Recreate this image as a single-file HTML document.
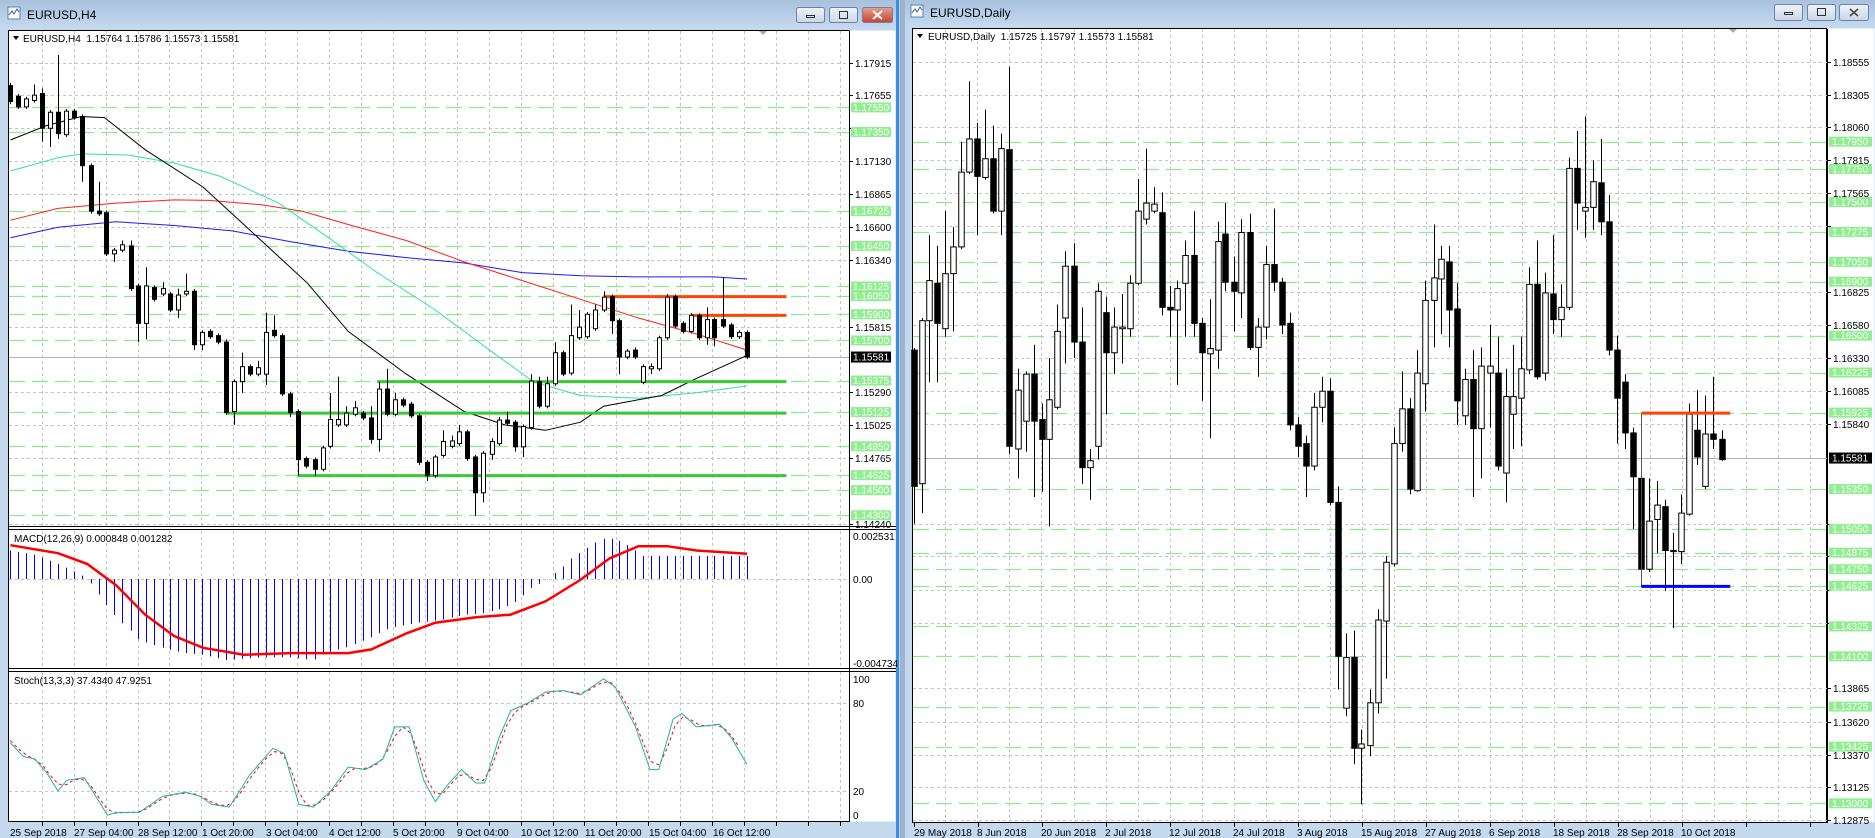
<!DOCTYPE html>
<html><head><meta charset="utf-8"><style>
html,body{margin:0;padding:0;width:1875px;height:838px;overflow:hidden;background:#b9d1ea;}
svg{display:block;font-family:"Liberation Sans",sans-serif;}
</style></head><body>
<svg id="s" width="1875" height="838" viewBox="0 0 1875 838" xmlns="http://www.w3.org/2000/svg">
<defs><linearGradient id="tb" x1="0" y1="0" x2="0" y2="1"><stop offset="0" stop-color="#a9c1de"/><stop offset="1" stop-color="#c3d8ee"/></linearGradient>
<linearGradient id="bt" x1="0" y1="0" x2="0" y2="1"><stop offset="0" stop-color="#eef3fa"/><stop offset="1" stop-color="#c9d7e8"/></linearGradient>
<linearGradient id="bx" x1="0" y1="0" x2="0" y2="1"><stop offset="0" stop-color="#e8a090"/><stop offset="1" stop-color="#c84030"/></linearGradient></defs>
<rect x="0" y="0" width="898" height="838" fill="#c4d8ee"/>
<rect x="0" y="0" width="898" height="27" fill="url(#tb)"/>
<rect x="905" y="0" width="970" height="838" fill="#c4d8ee"/>
<rect x="905" y="0" width="970" height="25" fill="url(#tb)"/>
<rect x="896" y="0" width="3" height="838" fill="#3b8fe0"/>
<rect x="900" y="0" width="5" height="838" fill="#9fb4cc"/>
<rect x="8" y="7" width="12" height="12" fill="#fff" stroke="#5a7fb0"/><path d="M9 15 L12 11 L14 14 L17 9 L19 12" stroke="#2a60b0" fill="none"/>
<text x="27" y="19" font-size="12" fill="#000">EURUSD,H4</text>
<rect x="911" y="5" width="12" height="12" fill="#fff" stroke="#5a7fb0"/><path d="M912 13 L915 9 L917 12 L920 7 L922 10" stroke="#2a60b0" fill="none"/>
<text x="930" y="17" font-size="12" fill="#000">EURUSD,Daily</text>
<g stroke="#6b82a3" stroke-width="1">
<rect x="796.5" y="7.5" width="28" height="15" rx="2" fill="url(#bt)"/><rect x="829.5" y="7.5" width="28" height="15" rx="2" fill="url(#bt)"/><rect x="862.5" y="7.5" width="30" height="15" rx="2" fill="url(#bx)"/>
<rect x="1774.5" y="4.5" width="28" height="16" rx="2" fill="url(#bt)"/><rect x="1807.5" y="4.5" width="28" height="16" rx="2" fill="url(#bt)"/><rect x="1839.5" y="4.5" width="29" height="16" rx="2" fill="url(#bt)"/>
</g>
<g stroke="#333" fill="none"><rect x="806.5" y="15.5" width="8" height="2"/><rect x="839.5" y="11.5" width="8" height="7"/><rect x="1784.5" y="12.5" width="8" height="2"/><rect x="1817.5" y="8.5" width="8" height="7"/></g>
<path d="M873 11 L882 19 M882 11 L873 19" stroke="#fff" stroke-width="2"/>
<path d="M1850 9 L1858 16 M1858 9 L1850 16" stroke="#444" stroke-width="1.5"/>
<rect x="8.5" y="30.5" width="841" height="791" fill="#fff" stroke="#000"/>
<rect x="849.5" y="30.5" width="46" height="791" fill="#fff"/>
<rect x="912.5" y="28.5" width="914" height="794" fill="#fff" stroke="#000"/>
<rect x="1827.5" y="28.5" width="47" height="794" fill="#fff"/>
<g id="g"></g>
<path d="M13 36 L19 36 L16 40 Z" fill="#000"/>
<text x="23" y="42" font-size="10" fill="#000">EURUSD,H4&#160;&#160;1.15764 1.15786 1.15573 1.15581</text>
<path d="M917 34 L923 34 L920 38 Z" fill="#000"/>
<text x="928" y="40" font-size="10" fill="#000">EURUSD,Daily&#160;&#160;1.15725 1.15797 1.15573 1.15581</text>
<path d="M759 31 L767 31 L763 35 Z" fill="#aaa"/>
<path d="M1729 29 L1737 29 L1733 33 Z" fill="#aaa"/>
<text x="14" y="542" font-size="10">MACD(12,26,9) 0.000848 0.001282</text>
<text x="14" y="684" font-size="10">Stoch(13,3,3) 37.4340 47.9251</text>
<g font-size="10" fill="#000">
<text x="853" y="540">0.002531</text><text x="853" y="583">0.00</text><text x="853" y="667">-0.004734</text>
<text x="853" y="683">100</text><text x="853" y="707">80</text><text x="853" y="795">20</text><text x="853" y="819">0</text>
</g>
<g font-size="10" fill="#000" id="dates">
<text x="10" y="836">25 Sep 2018</text><text x="74" y="836">27 Sep 04:00</text><text x="138" y="836">28 Sep 12:00</text><text x="202" y="836">1 Oct 20:00</text><text x="266" y="836">3 Oct 04:00</text><text x="329" y="836">4 Oct 12:00</text><text x="393" y="836">5 Oct 20:00</text><text x="457" y="836">9 Oct 04:00</text><text x="521" y="836">10 Oct 12:00</text><text x="585" y="836">11 Oct 20:00</text><text x="649" y="836">15 Oct 04:00</text><text x="713" y="836">16 Oct 12:00</text>
<text x="914" y="836">29 May 2018</text><text x="977" y="836">8 Jun 2018</text><text x="1041" y="836">20 Jun 2018</text><text x="1105" y="836">2 Jul 2018</text><text x="1169" y="836">12 Jul 2018</text><text x="1233" y="836">24 Jul 2018</text><text x="1297" y="836">3 Aug 2018</text><text x="1361" y="836">15 Aug 2018</text><text x="1425" y="836">27 Aug 2018</text><text x="1489" y="836">6 Sep 2018</text><text x="1553" y="836">18 Sep 2018</text><text x="1617" y="836">28 Sep 2018</text><text x="1681" y="836">10 Oct 2018</text>
</g>
<g id="labels" font-size="10"></g>
</svg>
<script>
var NS="http://www.w3.org/2000/svg",G=document.getElementById("g"),LB=document.getElementById("labels");
function el(t,a,p){var e=document.createElementNS(NS,t);for(var k in a)e.setAttribute(k,a[k]);(p||G).appendChild(e);return e;}
var Lw={ox:0,sx:1/1.723,sy:1/1.871},Rw={ox:900,sx:1/1.608,sy:1/1.871};
function X(w,x){return w.ox+x*w.sx;}function Y(w,y){return y*w.sy;}
function hl(x1,x2,y,c,sw,da){var a={x1:x1,x2:x2,y1:y,y2:y,stroke:c,"stroke-width":sw||1};if(da)a["stroke-dasharray"]=da;el("line",a);}
function vl(x,y1,y2,c,sw,da){var a={x1:x,x2:x,y1:y1,y2:y2,stroke:c,"stroke-width":sw||1};if(da)a["stroke-dasharray"]=da;el("line",a);}
var GR="#c4c4c4";
for(var gx=72;gx<1463;gx+=55){var x=Math.round(X(Lw,gx))+.5;vl(x,31,526,GR,1,"3,3");vl(x,531,668,GR,1,"3,3");vl(x,672,821,GR,1,"3,3");vl(x,821,826,"#000");}
[[1.17915,117],[1.17655,178],[1.17130,302],[1.16865,363],[1.16600,425],[1.16340,487],[1.15815,611],[1.15290,734],[1.15025,796],[1.14765,857],[1.14240,981],[0,240]].forEach(function(p){var y=Math.round(Y(Lw,p[1]))+.5;hl(9,849,y,GR,1,"3,3");hl(849,853,y,"#000");if(p[0])el("text",{x:855,y:y+3.5,"font-size":10},LB).textContent=p[0].toFixed(5);});
hl(9,849,Math.round(Y(Lw,1315))+.5,GR,1,"3,3");hl(9,849,Math.round(Y(Lw,1480))+.5,GR,1,"3,3");hl(9,849,579.5,GR,1,"3,3");
var lg=[["1.17550",201],["1.17350",247],["1.16725",395],["1.16450",460],["1.16125",536],["1.16050",554],["1.15900",588],["1.15700",637],["1.15375",712],["1.15125",771],["1.14850",835],["1.14625",889],["1.14500",917],["1.14300",964]];
lg.forEach(function(p){var y=Math.round(Y(Lw,p[1]))+.5;hl(9,849,y,"#90e890",1.2,"16,7");});
hl(9,896,526.5,"#000");hl(9,896,529.5,"#000");hl(9,896,668.5,"#000");hl(9,896,671.5,"#000");
vl(849.5,31,822,"#000");
hl(9,849,Math.round(Y(Lw,668))+.5,"#b0b0b0");
function pl(w,pts,c,sw,da){var s=pts.map(function(p){return X(w,p[0]).toFixed(1)+","+Y(w,p[1]).toFixed(1)}).join(" ");var a={points:s,fill:"none",stroke:c,"stroke-width":sw||1};if(da)a["stroke-dasharray"]=da;el("polyline",a);}
pl(Lw,[[18,445],[100,425],[200,415],[300,422],[400,432],[500,452],[600,470],[700,482],[800,492],[900,510],[1000,516],[1100,518],[1230,518],[1287,522]],"#1a1aff");
pl(Lw,[[18,412],[100,390],[200,380],[300,374],[360,375],[450,383],[520,395],[600,420],[700,450],[800,490],[900,525],[1000,560],[1100,595],[1200,625],[1287,655]],"#ff2020");
pl(Lw,[[18,320],[100,295],[140,288],[220,290],[300,305],[380,330],[480,380],[560,440],[650,510],[750,580],[850,660],[920,715],[1000,740],[1100,745],[1200,735],[1287,722]],"#30e0a8");
pl(Lw,[[18,262],[80,235],[140,218],[180,220],[250,280],[350,350],[450,450],[530,530],[600,620],[700,700],[800,770],[870,795],[940,805],[1000,790],[1040,760],[1140,740],[1200,708],[1287,665]],"#000");
function hlz(w,x1,x2,y,c,sw){hl(X(w,x1),X(w,x2),Y(w,y),c,sw);}
hlz(Lw,1040,1355,555,"#ff4500",3);hlz(Lw,1190,1355,590,"#ff4500",3);
hlz(Lw,650,1355,714,"#33cc33",3);hlz(Lw,390,1355,773,"#33cc33",3);hlz(Lw,513,1355,890,"#33cc33",3);
function candles(w,arr,bw){arr.forEach(function(c){var x=Math.round(X(w,c[0]))+.5,t=Y(w,c[1]),b=Y(w,c[2]),h=Y(w,c[4]!=null?c[4]:c[1]-4),l=Y(w,c[5]!=null?c[5]:c[2]+4);vl(x,h,l,"#000");var hh=Math.max(b-t,1);el("rect",{x:x-bw/2,y:t,width:bw,height:hh,fill:c[3]=="w"?"#fff":"#000",stroke:"#000","stroke-width":1});});}
var LC=[[18,160,190,"b",155,195],[31,180,200,"b"],[44,185,200,"w"],[58,178,188,"w",158],[72,175,240,"b",165,265],[86,210,240,"w",null,275],[100,210,250,"b",103,260],[114,208,252,"w"],[128,208,220,"b"],[142,218,310,"b",null,340],[156,310,395,"b",null,400],[170,395,400,"b",340],[183,398,475,"b"],[197,468,475,"w",null,490],[211,458,468,"w",450],[225,460,540,"b",450],[238,535,605,"b",null,640],[252,535,605,"w",500,635],[266,538,560,"b"],[280,540,550,"w",528],[293,550,580,"b"],[307,552,580,"w",540,595],[320,545,550,"w",512],[334,545,645,"b",null,655],[348,622,645,"w",null,655],[362,620,630,"b"],[376,628,640,"b"],[390,640,772,"b",635],[403,714,770,"w",null,795],[417,686,714,"w",660,735],[431,686,700,"b"],[445,688,700,"w",675],[459,622,700,"w",585,720],[472,618,628,"b",590],[486,628,737,"b"],[500,737,772,"b",null,780],[514,770,860,"b",null,890],[528,858,872,"b"],[542,860,878,"b",null,890],[556,838,878,"w"],[569,785,835,"w",735],[583,785,795,"w",705],[597,773,795,"w",760],[611,763,775,"w",750],[625,773,782,"b"],[639,782,822,"b",760,830],[653,728,822,"w",715,845],[666,728,775,"b",690],[680,748,775,"w",735],[694,748,758,"b"],[708,756,778,"b"],[722,778,865,"b",null,870],[736,865,890,"b",null,900],[750,855,890,"w"],[764,826,852,"w",805],[778,825,835,"w",815],[791,808,830,"w",795],[805,808,858,"b"],[819,855,922,"b",null,965],[833,848,922,"w",null,940],[847,826,850,"w",820,860],[860,786,830,"w",780],[873,786,792,"b",770],[887,790,836,"b",null,845],[901,798,836,"w",null,855],[915,713,800,"w",700],[929,714,760,"b",705],[943,718,760,"w",705],[956,660,718,"w",640],[970,660,700,"b"],[984,628,698,"w",570],[998,612,632,"w",580],[1012,588,630,"w"],[1026,580,615,"w",570],[1040,556,580,"w",545],[1054,555,600,"b",null,625],[1066,600,668,"b",null,700],[1080,657,668,"w"],[1094,655,668,"b",650],[1108,686,715,"w"],[1122,686,690,"w",680,700],[1135,632,690,"w"],[1149,556,632,"w",550],[1163,555,610,"b"],[1177,605,620,"b"],[1190,590,620,"w"],[1204,590,632,"b"],[1218,598,632,"w",575,645],[1231,598,632,"b",null,648],[1245,598,610,"b",520],[1259,608,630,"b"],[1273,622,630,"w"],[1287,622,668,"b"]];
candles(Lw,LC,4);
function interp(pts,x){for(var i=0;i<pts.length-1;i++){if(x<=pts[i+1][0]){var t=(x-pts[i][0])/(pts[i+1][0]-pts[i][0]);return pts[i][1]+t*(pts[i+1][1]-pts[i][1]);}}return pts[pts.length-1][1];}
var MH=[[18,1030],[60,1038],[100,1055],[140,1075],[155,1090],[170,1112],[185,1135],[200,1155],[225,1180],[240,1198],[260,1205],[290,1215],[320,1222],[350,1225],[390,1235],[450,1230],[500,1230],[540,1235],[560,1222],[600,1210],[640,1192],[670,1175],[720,1165],[760,1160],[800,1150],[830,1148],[860,1140],[885,1128],[900,1115],[915,1100],[930,1092],[942,1085],[956,1072],[970,1060],[984,1045],[998,1035],[1012,1025],[1026,1015],[1040,1008],[1054,1008],[1066,1012],[1080,1020],[1094,1030],[1108,1040],[1287,1040]];
LC.forEach(function(c){var x=Math.round(X(Lw,c[0]))+.5;vl(x,579,Y(Lw,interp(MH,c[0])),"#0000ff");});
pl(Lw,[[18,1020],[100,1035],[150,1055],[200,1095],[250,1150],[300,1190],[350,1212],[420,1225],[500,1222],[600,1222],[640,1215],[700,1185],[750,1165],[820,1155],[880,1150],[940,1125],[1000,1085],[1050,1045],[1100,1022],[1150,1022],[1200,1030],[1287,1036]],"#ff0000",2.5);
var ST=[[18,1390],[40,1415],[60,1420],[80,1445],[100,1480],[115,1460],[145,1455],[165,1490],[185,1525],[200,1520],[240,1520],[280,1490],[320,1482],[345,1490],[365,1505],[395,1510],[430,1450],[470,1400],[490,1410],[515,1505],[540,1510],[570,1480],[600,1435],[630,1440],[660,1420],[680,1360],[705,1360],[730,1460],[750,1500],[770,1470],[795,1440],[820,1465],[835,1465],[860,1380],[880,1330],[910,1315],[940,1295],[970,1292],[1000,1300],[1040,1270],[1060,1285],[1095,1360],[1120,1440],[1135,1440],[1160,1345],[1175,1335],[1200,1360],[1240,1355],[1260,1380],[1287,1430]];
var SS=[];for(var sx=18;sx<=1287;sx+=13.8){var v=(interp(ST,sx-14)+interp(ST,sx-4)+interp(ST,sx+6))/3;SS.push([sx,v]);}
pl(Lw,SS,"#ff0000",1,"3,3");pl(Lw,ST,"#20b2aa",1);
lg.forEach(function(p){var y=Y(Lw,p[1]);el("rect",{x:851,y:y-5,width:40,height:10,fill:"#90ee90"},LB);el("text",{x:853,y:y+3.5,fill:"#fff","font-size":10},LB).textContent=p[0];});
(function(){var y=Y(Lw,668);el("rect",{x:851,y:y-5.5,width:40,height:11,fill:"#000"},LB);el("text",{x:853,y:y+3.5,fill:"#fff","font-size":10},LB).textContent="1.15581";})();

for(var gx=73;gx<1490;gx+=51.5){var x=Math.round(X(Rw,gx))+.5;vl(x,29,822,GR,1,"3,3");}
for(var gx=22;gx<1490;gx+=103){var x=Math.round(X(Rw,gx))+.5;vl(x,822,827,"#000");}
[[1.18555,116],[1.18305,177],[1.18060,238],[1.17815,300],[1.17565,362],[0,423],[1.16825,547],[1.16580,609],[1.16330,670],[1.16085,732],[1.15840,794],[0,980],[0,1040],[0,1103],[0,1165],[1.13865,1288],[1.13620,1350],[1.13370,1412],[1.13125,1473],[1.12875,1535]].forEach(function(p){var y=Math.round(Y(Rw,p[1]))+.5;hl(913,1827,y,GR,1,"3,3");hl(1827,1831,y,"#000");if(p[0])el("text",{x:1833,y:y+3.5,"font-size":10},LB).textContent=p[0].toFixed(5);});
var rg=[["1.17950",265],["1.17750",316],["1.17500",378],["1.17275",434],["1.17050",490],["1.16900",527],["1.16500",628],["1.16225",697],["1.15925",772],["1.15350",915],["1.15050",990],["1.14875",1034],["1.14750",1065],["1.14625",1096],["1.14325",1172],["1.14100",1228],["1.13725",1322],["1.13425",1397],["1.13000",1503]];
rg.forEach(function(p){hl(913,1827,Math.round(Y(Rw,p[1]))+.5,"#90e890",1.2,"16,7");});
vl(1827.5,29,823,"#000");
hl(913,1827,Math.round(Y(Rw,857))+.5,"#b0b0b0");
var RC=[[22,655,910,"b",null,980],[35,600,905,"w",595,960],[47,525,600,"w",440,715],[60,530,605,"b",460,715],[73,512,615,"w",395,630],[86,462,512,"w",425,620],[98,322,462,"w",265],[111,260,322,"w",152],[124,260,330,"b",230,440],[137,297,332,"w",205],[150,297,395,"b",235],[163,278,395,"w",250,440],[176,280,835,"b",125,850],[189,730,840,"w",690,895],[202,700,788,"w",695,845],[215,700,788,"b",645,930],[228,785,822,"b",755,920],[240,748,822,"w",670,985],[253,620,762,"w",570],[266,498,595,"w",470,680],[279,498,640,"b",455,670],[292,640,875,"b",575,905],[305,862,875,"w",840,935],[318,545,835,"w",530,860],[331,585,660,"b",555,775],[344,612,660,"w",575,700],[357,612,615,"w",550,680],[370,530,615,"w",515,630],[382,395,530,"w",335],[395,380,410,"w",278,420],[408,382,395,"w",350],[421,398,575,"b",360,590],[434,575,580,"b",535,630],[446,540,580,"w",525,720],[459,478,530,"w",450,630],[472,478,605,"b",395,630],[485,605,660,"b",595,750],[498,652,662,"w",560,820],[511,452,655,"w",415,690],[523,438,528,"b",380,545],[537,528,545,"b",480,620],[549,435,548,"w",410,595],[562,435,650,"b",400,655],[575,612,650,"w",595,705],[588,495,612,"w",460,635],[601,495,528,"b",390,545],[614,528,608,"b",520,625],[627,605,795,"b",585,805],[640,795,835,"b",780,855],[653,830,872,"b",815,930],[666,762,872,"w",735,880],[678,732,762,"w",705,790],[691,732,940,"b",708,945],[704,940,1228,"b",910,1290],[717,1230,1325,"w",1185,1340],[730,1230,1400,"b",1180,1430],[742,1392,1400,"w",1365,1505],[755,1315,1395,"w",1290,1415],[768,1160,1315,"w",1140,1335],[781,1052,1162,"w",1040,1270],[794,830,1055,"w",800,1060],[807,765,830,"w",695,845],[820,765,915,"b",745,925],[832,698,918,"w",655,920],[845,562,718,"w",525,770],[858,520,562,"w",420,650],[870,485,522,"w",460,625],[883,490,580,"b",460,650],[896,578,750,"b",530,795],[909,710,778,"w",690,795],[922,710,802,"b",655,930],[935,685,802,"w",650,895],[948,685,698,"w",608,800],[961,698,872,"b",630,880],[974,742,885,"w",690,940],[986,742,775,"w",645,840],[999,690,745,"w",630,835],[1012,532,692,"w",500,700],[1024,532,705,"b",450,710],[1037,548,698,"w",510,712],[1050,550,598,"b",440,625],[1063,575,598,"w",532,630],[1076,315,575,"w",295,580],[1089,315,380,"b",245,430],[1102,388,395,"w",218,445],[1115,340,388,"w",300,430],[1128,342,415,"b",260,440],[1140,415,655,"b",365,665],[1153,655,745,"b",628,830],[1166,715,810,"b",700,840],[1179,810,892,"b",800,990],[1192,895,1065,"b",880,1090],[1204,975,1065,"w",895,1070],[1217,945,972,"w",900,1035],[1230,948,1030,"b",935,1105],[1243,1030,1032,"w",997,1175],[1256,960,1032,"w",925,1055],[1269,775,962,"w",755,965],[1282,805,855,"b",730,870],[1295,812,910,"w",740,915],[1308,812,822,"b",705,840],[1321,822,860,"b",805,862]];
candles(Rw,RC,5.5);
vl(Math.round(X(Rw,1192))+.5,Y(Rw,773),Y(Rw,1097),"#555");
hlz(Rw,1192,1335,773,"#ff4500",3);hlz(Rw,1192,1335,1097,"#0000ff",3);
rg.forEach(function(p){var y=Y(Rw,p[1]);el("rect",{x:1829,y:y-5,width:43,height:10,fill:"#90ee90"},LB);el("text",{x:1832,y:y+3.5,fill:"#fff","font-size":10},LB).textContent=p[0];});
(function(){var y=Y(Rw,857);el("rect",{x:1829,y:y-5.5,width:43,height:11,fill:"#000"},LB);el("text",{x:1832,y:y+3.5,fill:"#fff","font-size":10},LB).textContent="1.15581";})();
</script>
</body></html>
